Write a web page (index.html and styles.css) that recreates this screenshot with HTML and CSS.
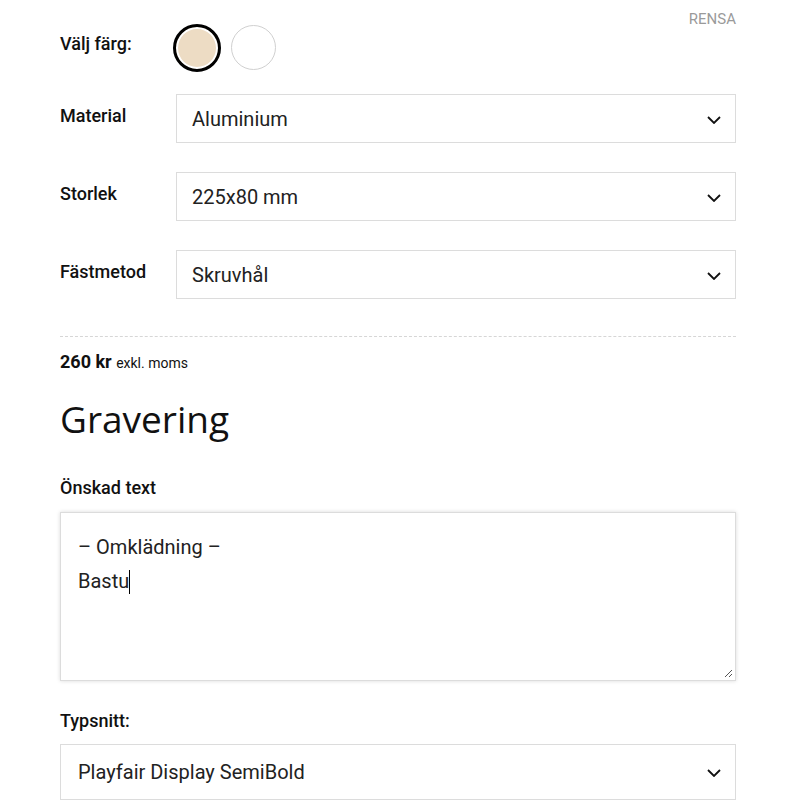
FILE: index.html
```html
<!DOCTYPE html>
<html lang="sv">
<head>
  <meta charset="UTF-8">
  <meta name="viewport" content="width=device-width, initial-scale=1.0">
  <title>Skylt</title>
  <link rel="stylesheet" href="styles.css">
</head>
<body>
  <div class="product">
    <div class="clear-row"><a class="clear" href="#">RENSA</a></div>

    <div class="option color-option">
      <div class="label">Välj färg:</div>
      <div class="swatches">
        <span class="swatch beige selected"></span>
        <span class="swatch white"></span>
      </div>
    </div>

    <div class="option">
      <label class="label" for="material">Material</label>
      <div class="select-wrap">
        <select id="material">
          <option>Aluminium</option>
        </select>
        <svg class="chevron" viewBox="0 0 14 8" width="14" height="8"><path d="M1 1l6 6 6-6" fill="none" stroke="#111" stroke-width="1.8"/></svg>
      </div>
    </div>

    <div class="option">
      <label class="label" for="size">Storlek</label>
      <div class="select-wrap">
        <select id="size">
          <option>225x80 mm</option>
        </select>
        <svg class="chevron" viewBox="0 0 14 8" width="14" height="8"><path d="M1 1l6 6 6-6" fill="none" stroke="#111" stroke-width="1.8"/></svg>
      </div>
    </div>

    <div class="option">
      <label class="label" for="mount">Fästmetod</label>
      <div class="select-wrap">
        <select id="mount">
          <option>Skruvhål</option>
        </select>
        <svg class="chevron" viewBox="0 0 14 8" width="14" height="8"><path d="M1 1l6 6 6-6" fill="none" stroke="#111" stroke-width="1.8"/></svg>
      </div>
    </div>

    <hr class="divider">

    <div class="price"><strong>260 kr</strong> <span class="vat">exkl. moms</span></div>

    <h2 class="section-title">Gravering</h2>

    <div class="field">
      <div class="field-label">Önskad text</div>
      <div class="textarea">
        <div>– Omklädning –</div>
        <div>Bastu<span class="caret"></span></div>
        <svg class="grip" viewBox="0 0 10 10" width="10" height="10"><path d="M9 2L2 9M9 6L6 9" stroke="#555" stroke-width="1"/></svg>
      </div>
    </div>

    <div class="field">
      <label class="field-label" for="font">Typsnitt:</label>
      <div class="select-wrap">
        <select id="font" class="wide">
          <option>Playfair Display SemiBold</option>
        </select>
        <svg class="chevron" viewBox="0 0 14 8" width="14" height="8"><path d="M1 1l6 6 6-6" fill="none" stroke="#111" stroke-width="1.8"/></svg>
      </div>
    </div>
  </div>
</body>
</html>
```

FILE: styles.css
```css
body {
  margin: 0;
  background: #fff;
  font-family: Roboto, "Liberation Sans", sans-serif;
  color: #111;
}
.product {
  width: 676px;
  margin: 0 0 0 60px;
  padding-top: 10px;
}
.clear-row {
  display: flex;
  justify-content: flex-end;
  height: 16px;
}
.clear {
  font-size: 15px;
  color: #9a9a9a;
  text-decoration: none;
}
.option {
  display: flex;
  align-items: flex-start;
  margin-bottom: 29px;
}
.label {
  width: 116px;
  flex-shrink: 0;
  font-size: 18px;
  font-weight: 500;
  padding-top: 11px;
}
.color-option {
  margin-top: -2px;
  margin-bottom: 22px;
}
.color-option .label {
  padding-top: 9px;
}
.swatches {
  display: flex;
  gap: 10px;
  margin-left: -3px;
}
.swatch {
  width: 45px;
  height: 45px;
  border-radius: 50%;
  box-sizing: border-box;
  border: 1px solid #d0d0d0;
}
.swatch.beige {
  background: #eddcc4;
}
.swatch.selected {
  width: 48px;
  height: 48px;
  border: 3px solid #000;
  box-shadow: inset 0 0 0 2px #fff;
}
.swatch.white {
  margin-top: 1px;
  background: #fff;
}
.select-wrap {
  position: relative;
  flex: 1;
}
select {
  appearance: none;
  -webkit-appearance: none;
  width: 100%;
  height: 49px;
  border: 1px solid #dcdcdc;
  border-radius: 0;
  background: #fff;
  font-family: Roboto, "Liberation Sans", sans-serif;
  font-size: 20px;
  color: #222;
  padding: 0 40px 0 15px;
  margin: 0;
}
select.wide {
  height: 56px;
  padding-left: 17px;
}
.chevron {
  position: absolute;
  right: 15px;
  top: 50%;
  margin-top: -3px;
  pointer-events: none;
}
.divider {
  border: 0;
  border-top: 1px dashed #d6d6d6;
  margin: 37px 0 0;
}
.price {
  margin-top: 14px;
  font-size: 18px;
}
.price strong {
  font-weight: 700;
}
.vat {
  font-size: 14px;
}
.section-title {
  font-family: "Open Sans", "Noto Sans", sans-serif;
  font-weight: 400;
  font-size: 37px;
  margin: 23px 0 0;
  line-height: 1.3;
}
.field {
  margin-top: 34px;
}
.field-label {
  display: block;
  font-size: 18px;
  font-weight: 500;
  margin-bottom: 14px;
}
.textarea {
  position: relative;
  height: 169px;
  box-sizing: border-box;
  border: 1px solid #dcdcdc;
  box-shadow: 0 0 4px rgba(0, 0, 0, 0.15);
  padding: 17px 17px;
  font-size: 20px;
  line-height: 34px;
  color: #222;
}
.caret {
  display: inline-block;
  width: 1px;
  height: 24px;
  background: #000;
  vertical-align: -6px;
}
.grip {
  position: absolute;
  right: 2px;
  bottom: 2px;
}
.field + .field {
  margin-top: 29px;
}
.field + .field .field-label {
  margin-bottom: 13px;
}
```
